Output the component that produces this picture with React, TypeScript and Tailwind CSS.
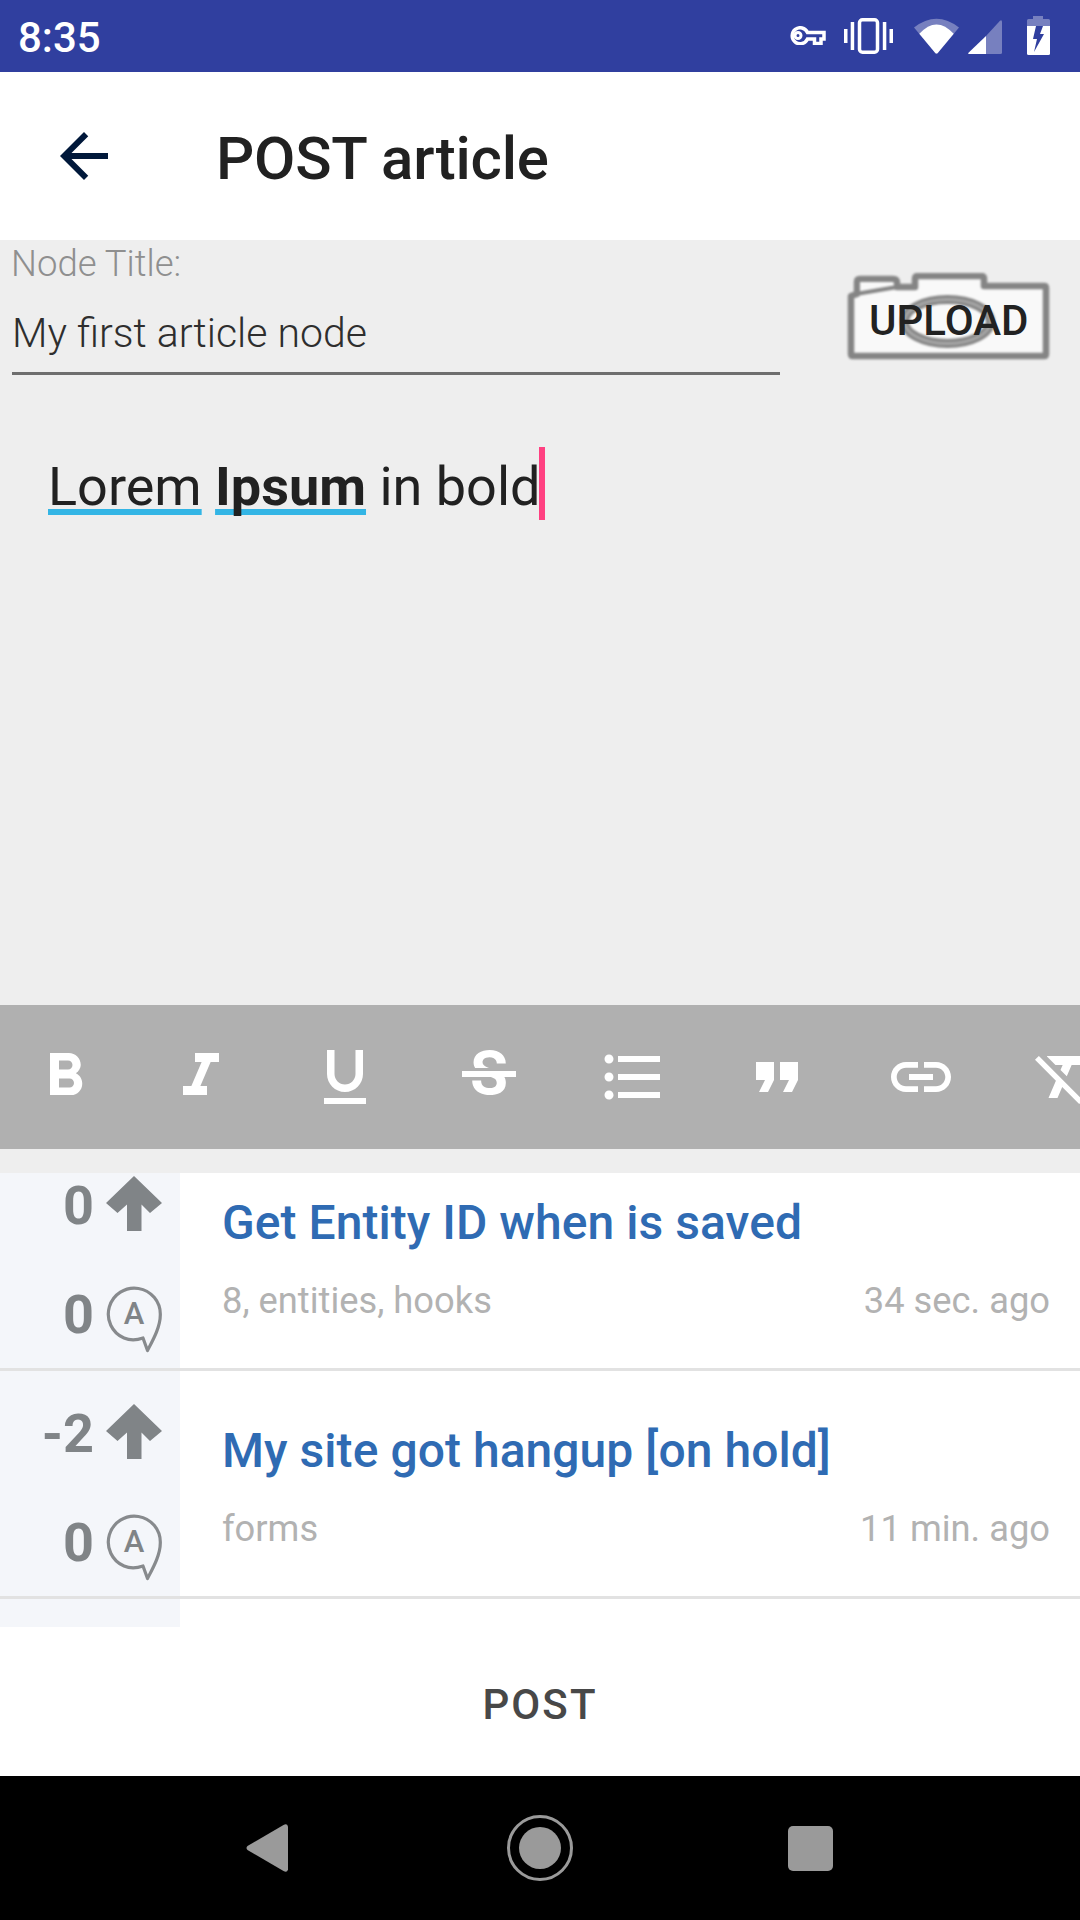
import React from "react";

const StatusIcons = () => (
  <div className="flex items-start h-[72px]">
    <svg className="mt-[26px] ml-0" width="38" height="19" viewBox="0 0 38 19">
      <path d="M19.5 6.5H36V13H33V17.5H26.5V13H19.5A8 8 0 1 1 19.5 6.5Z" fill="none" stroke="#fff" strokeWidth="3.5" strokeLinejoin="miter" />
      <circle cx="10" cy="9.5" r="3" fill="none" stroke="#fff" strokeWidth="3" />
    </svg>
    <svg className="mt-[18px] ml-[18px]" width="49" height="36" viewBox="0 0 49 36">
      <rect x="15.5" y="1.75" width="18" height="32.5" rx="3" fill="none" stroke="#fff" strokeWidth="3.5" />
      <rect x="0" y="11" width="3.5" height="14" fill="#fff" />
      <rect x="6.7" y="4" width="3.5" height="28" fill="#fff" />
      <rect x="38.8" y="4" width="3.5" height="28" fill="#fff" />
      <rect x="45.5" y="11" width="3.5" height="14" fill="#fff" />
    </svg>
    <svg className="mt-[17px] ml-[21px]" width="45" height="37" viewBox="0 0 45 37">
      <path d="M0 10.5Q22.5 -7 45 10.5L23.5 36.2Q22.5 37 21.5 36.2Z" fill="#7780bf" />
      <path d="M5.3 16.8Q22.5 -2 39.7 16.8L23.5 36.2Q22.5 37 21.5 36.2Z" fill="#fff" />
    </svg>
    <svg className="mt-[20px] ml-[9px]" width="34" height="34" viewBox="0 0 34 34">
      <path d="M32 0.8Q34 -0.5 34 2V32.5Q34 34 32.5 34H18V16Z" fill="#7780bf" />
      <path d="M18 16V34H1Q-0.5 34 0.5 32.8Z" fill="#fff" />
    </svg>
    <svg className="mt-[16px] ml-[25px]" width="23" height="39" viewBox="0 0 23 39">
      <path d="M6 0H16V3H21.5Q23 3 23 4.5V10H0V4.5Q0 3 1.5 3H6Z" fill="#7780bf" />
      <path d="M0 10H23V37.5Q23 39 21.5 39H1.5Q0 39 0 37.5Z" fill="#fff" />
      <path d="M9 10H16L13 18H17L7 36L10 23H6Z" fill="#303f9f" />
    </svg>
  </div>
);

const ToolIcon = ({ d, className = "" }: { d: string; className?: string }) => (
  <svg className={`shrink-0 ${className}`} width="72" height="72" viewBox="0 0 24 24" fill="#fff">
    <path d={d} />
  </svg>
);

const tools = [
  "M15.6 10.79c.97-.67 1.65-1.77 1.65-2.79 0-2.26-1.75-4-4-4H7v14h7.04c2.09 0 3.71-1.7 3.71-3.79 0-1.52-.86-2.82-2.15-3.42zM10 6.5h3c.83 0 1.5.67 1.5 1.5s-.67 1.5-1.5 1.5h-3v-3zm3.5 9H10v-3h3.5c.83 0 1.5.67 1.5 1.5s-.67 1.5-1.5 1.5z",
  "M10 4v3h2.21l-3.42 8H6v3h8v-3h-2.21l3.42-8H18V4z",
  "M12 17c3.31 0 6-2.69 6-6V3h-2.5v8c0 1.93-1.57 3.5-3.5 3.5S8.5 12.93 8.5 11V3H6v8c0 3.31 2.69 6 6 6zm-7 2v2h14v-2H5z",
  "M6.85 7.08C6.85 4.37 9.45 3 12.24 3c1.64 0 3 .49 3.9 1.28.77.65 1.46 1.73 1.46 3.24h-3.01c0-.31-.05-.59-.15-.85-.29-.86-1.2-1.28-2.25-1.28-1.86 0-2.34 1.02-2.34 1.7 0 .48.25.88.74 1.21.38.25.77.48 1.41.7H7.39c-.21-.34-.54-.89-.54-1.92zM21 12v-2H3v2h9.62c1.15.45 1.96.75 1.96 1.97 0 1-.81 1.67-2.28 1.67-1.54 0-2.93-.54-2.93-2.51H6.4c0 .55.08 1.13.24 1.58.81 2.29 3.29 3.3 5.67 3.3 2.27 0 5.3-.89 5.3-4.05 0-.3-.01-1.16-.48-1.94H21z",
  "M4 10.5c-.83 0-1.5.67-1.5 1.5s.67 1.5 1.5 1.5 1.5-.67 1.5-1.5-.67-1.5-1.5-1.5zm0-6c-.83 0-1.5.67-1.5 1.5S3.17 7.5 4 7.5 5.5 6.83 5.5 6 4.83 4.5 4 4.5zm0 12c-.83 0-1.5.68-1.5 1.5s.68 1.5 1.5 1.5 1.5-.68 1.5-1.5-.67-1.5-1.5-1.5zM7 19h14v-2H7v2zm0-6h14v-2H7v2zm0-8v2h14V5H7z",
  "M6 17h3l2-4V7H5v6h3zm8 0h3l2-4V7h-6v6h3z",
  "M3.9 12c0-1.71 1.39-3.1 3.1-3.1h4V7H7c-2.76 0-5 2.24-5 5s2.24 5 5 5h4v-1.9H7c-1.71 0-3.1-1.39-3.1-3.1zM8 13h8v-2H8v2zm9-6h-4v1.9h4c1.71 0 3.1 1.39 3.1 3.1s-1.39 3.1-3.1 3.1h-4V17h4c2.76 0 5-2.24 5-5s-2.24-5-5-5z",
  "M3.27 5L2 6.27l6.97 6.97L6.5 19h3l1.57-3.66L16.73 21 18 19.73 3.55 5.27 3.27 5zM6 5v.18L8.82 8h2.4l-.72 1.68 2.1 2.1L14.21 8H20V5H6z",
];

const UpArrow = () => (
  <svg width="56" height="55" viewBox="0 0 56 55" fill="#808487" className="shrink-0">
    <path d="M28 0L56 27L44 37L35.5 28.5V55H21V28.5L11.5 37L0 27Z" />
  </svg>
);

const Bubble = () => (
  <svg width="56" height="68" viewBox="0 0 56 68" className="shrink-0">
    <path d="M37 53C30 55.5 24 55.5 18 53A26 26 0 1 1 54.3 30C54.3 42 47 55 41.5 65.5Z" fill="none" stroke="#878a8d" strokeWidth="3.2" strokeLinejoin="round" />
    <text x="28" y="38.5" textAnchor="middle" fontFamily="Roboto" fontSize="31" fontWeight="500" fill="#808487">A</text>
  </svg>
);

const Stat = ({ value, icon, className }: { value: string; icon: React.ReactNode; className: string }) => (
  <div className={`flex justify-end items-start gap-[12px] pr-[18px] ${className}`}>
    <span className="pt-[2px] text-[54px] leading-[56px] font-bold text-[#808487]">{value}</span>
    {icon}
  </div>
);

const Row = ({ votes, title, tags, time }: { votes: string; title: string; tags: string; time: string }) => (
  <div className="flex h-[228px] shrink-0 border-b-[3px] border-[#e2e2e2]">
    <div className="w-[180px] shrink-0 bg-[#f4f6fa] pt-[33px]">
      <Stat value={votes} icon={<UpArrow />} className="h-[109px]" />
      <Stat value="0" icon={<Bubble />} className="" />
    </div>
    <div className="flex-1 bg-white pl-[42px] pr-[30px] pt-[52px]">
      <div className="text-[48px] leading-[56px] font-medium tracking-[0.05px] text-[#2f6bb3]">{title}</div>
      <div className="mt-[28px] flex justify-between text-[36.3px] leading-[44px] text-[#b2b2b2]">
        <span>{tags}</span>
        <span>{time}</span>
      </div>
    </div>
  </div>
);

export default function App() {
  return (
    <div className="flex h-[1920px] w-[1080px] flex-col overflow-hidden bg-white font-['Roboto',sans-serif]">
      <div className="flex h-[72px] shrink-0 justify-between bg-[#303f9f] pl-[18px] pr-[30px]">
        <span className="pt-[2px] text-[42px] leading-[72px] font-medium text-white">8:35</span>
        <StatusIcons />
      </div>

      <div className="flex h-[168px] shrink-0 items-center bg-white pl-[48px]">
        <svg width="72" height="72" viewBox="0 0 24 24" fill="#00183a">
          <path d="M20 11H7.83l5.59-5.59L12 4l-8 8 8 8 1.41-1.41L7.83 13H20v-2z" />
        </svg>
        <span className="ml-[96px] pt-[6px] text-[60px] leading-[72px] font-medium tracking-[-0.2px] text-[#212121]">POST article</span>
      </div>

      <div className="h-[765px] shrink-0 bg-[#eeeeee]">
        <div className="flex">
          <div className="ml-[12px] w-[768px] pt-[4px]">
            <div className="-ml-[1px] text-[36.5px] leading-[40px] font-light text-[#8f8f8f]">Node Title:</div>
            <div className="mt-[24px] text-[41px] leading-[50px] font-light text-[#2e2e2e]">My first article node</div>
            <div className="mt-[14px] h-[3px] bg-[#6e6e6e]" />
          </div>
          <div className="relative ml-[67px] mt-[33px] h-[87px] w-[203px]">
            <svg width="203" height="87" viewBox="0 0 203 87" className="blur-[0.8px]">
              <path d="M4 23L10 21V9Q10 6 13 6H46Q50 6 50 10V14H68V6Q68 3 71 3H134Q137 3 137 6V13H197Q199 13 199 15V81Q199 83 197 83H6Q4 83 4 81V25Q4 23 4 23Z" fill="#f9f9f9" stroke="#858585" strokeWidth="6.5" strokeLinejoin="round" />
              <path d="M13 20L13 9H46L47 13Z" fill="#f9f9f9" />
              <path d="M9 21L50 14" stroke="#858585" strokeWidth="4" />
              <ellipse cx="100.5" cy="48.5" rx="43" ry="22" fill="none" stroke="#858585" strokeWidth="9" />
              <ellipse cx="100.5" cy="48.5" rx="43" ry="22" fill="none" stroke="#a6a6a6" strokeWidth="3" />
            </svg>
            <span className="absolute left-[22px] top-[23px] text-[42px] leading-[50px] font-medium text-[#222222]">UPLOAD</span>
          </div>
        </div>
        <div className="mt-[80px] flex items-start pl-[48px]">
          <span className="text-[54px] leading-[64px] text-[#212121]">
            <span className="underline decoration-[#33b5e5] decoration-[6px] underline-offset-[4px] [text-decoration-skip-ink:none]">Lorem</span>{" "}
            <span className="font-bold underline decoration-[#33b5e5] decoration-[6px] underline-offset-[4px] [text-decoration-skip-ink:none]">Ipsum</span>{" "}
            in bold
          </span>
          <div className="-ml-[1px] -mt-[8px] h-[73px] w-[6px] bg-[#ff4081]" />
        </div>
      </div>

      <div className="flex h-[144px] shrink-0 items-center gap-[72px] overflow-hidden bg-[#b0b0b0] pl-[29px]">
        <ToolIcon d={tools[0]} className="-mr-[8px]" />
        {tools.slice(1).map((d) => (
          <ToolIcon key={d} d={d} />
        ))}
      </div>

      <div className="h-[24px] shrink-0 bg-[#eeeeee]" />

      <div className="flex h-[454px] shrink-0 flex-col overflow-hidden">
        <div className="-mt-[30px]">
          <Row votes="0" title="Get Entity ID when is saved" tags="8, entities, hooks" time="34 sec. ago" />
          <Row votes="-2" title="My site got hangup [on hold]" tags="forms" time="11 min. ago" />
          <div className="h-[60px] w-[180px] bg-[#f4f6fa]" />
        </div>
      </div>

      <div className="h-[149px] shrink-0 bg-white pt-[53px] text-center text-[42px] leading-[50px] font-medium tracking-[0.05em] text-[#484848]">
        POST
      </div>

      <div className="flex h-[144px] shrink-0 items-center bg-black pl-[246px]">
        <svg width="42" height="48" viewBox="0 0 42 48" fill="#9a9a9a">
          <path d="M42 2.5V45.5Q41 49 37.5 47L1.5 26Q-0.5 24 1.5 22L37.5 1Q41 -1 42 2.5Z" />
        </svg>
        <div className="ml-[219px] flex h-[66px] w-[66px] items-center justify-center rounded-full border-[3px] border-[#9a9a9a]">
          <div className="h-[42px] w-[42px] rounded-full bg-[#9a9a9a]" />
        </div>
        <div className="ml-[215px] h-[45px] w-[45px] rounded-[5px] bg-[#9a9a9a]" />
      </div>
    </div>
  );
}
